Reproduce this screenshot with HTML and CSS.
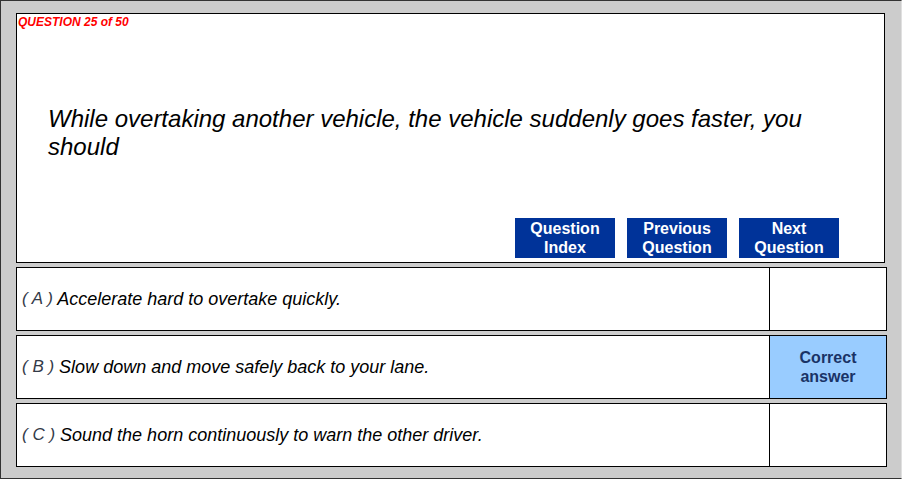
FILE: index.html
```html
<!DOCTYPE html>
<html>
<head>
<meta charset="utf-8">
<link rel="stylesheet" href="styles.css">
</head>
<body>
<div class="frame">
  <div class="question-box">
    <div class="q-label">QUESTION 25 of 50</div>
    <div class="q-text">While overtaking another vehicle, the vehicle suddenly goes faster, you should</div>
    <div class="nav">
      <div class="btn">Question<br>Index</div>
      <div class="btn">Previous<br>Question</div>
      <div class="btn">Next<br>Question</div>
    </div>
  </div>
  <div class="answer">
    <div class="a-text"><span class="a-key">( A )</span> Accelerate hard to overtake quickly.</div>
    <div class="a-mark"></div>
  </div>
  <div class="answer">
    <div class="a-text"><span class="a-key">( B )</span> Slow down and move safely back to your lane.</div>
    <div class="a-mark correct">Correct<br>answer</div>
  </div>
  <div class="answer">
    <div class="a-text"><span class="a-key">( C )</span> Sound the horn continuously to warn the other driver.</div>
    <div class="a-mark"></div>
  </div>
</div>
</body>
</html>
```
FILE: styles.css
```css
html, body {
  margin: 0;
  padding: 0;
  background: #cccccc;
}
.frame {
  width: 902px;
  height: 479px;
  box-sizing: border-box;
  background: #cccccc;
  border: 1px solid #333333;
  border-right-color: #e0e0e0;
  padding: 12px 14px 0 15px;
  font-family: "Liberation Sans", Arial, sans-serif;
  display: flex;
  flex-direction: column;
  gap: 4px;
}
.question-box {
  width: 869px;
  height: 250px;
  box-sizing: border-box;
  border: 1px solid #000;
  background: #fff;
  display: flex;
  flex-direction: column;
  padding: 0 45px 4px 0;
}
.q-label {
  color: #ff0000;
  font-size: 12px;
  font-weight: bold;
  font-style: italic;
  line-height: 14px;
  padding: 1px 0 0 1px;
}
.q-text {
  margin-top: 76px;
  margin-left: 31px;
  margin-right: 30px;
  font-size: 24px;
  font-style: italic;
  line-height: 28px;
  color: #000;
}
.nav {
  margin-top: auto;
  display: flex;
  justify-content: flex-end;
  gap: 12px;
}
.btn {
  width: 100px;
  height: 40px;
  background: #003399;
  color: #fff;
  font-weight: bold;
  font-size: 16px;
  line-height: 19px;
  text-align: center;
  box-sizing: border-box;
  padding-top: 1px;
}
.answer {
  width: 871px;
  height: 64px;
  box-sizing: border-box;
  border: 1px solid #000;
  background: #fff;
  display: flex;
}
.a-text {
  flex: 1;
  display: flex;
  align-items: center;
  padding-left: 5px;
  font-size: 18px;
  font-style: italic;
  color: #000;
  white-space: pre;
}
.a-key {
  color: #333a48;
  font-size: 17px;
}
.a-mark {
  width: 117px;
  box-sizing: border-box;
  border-left: 1px solid #000;
  display: flex;
  align-items: center;
  justify-content: center;
  text-align: center;
}
.a-mark.correct {
  background: #99ccff;
  color: #1a3366;
  font-weight: bold;
  font-size: 16px;
  line-height: 19px;
}
```
